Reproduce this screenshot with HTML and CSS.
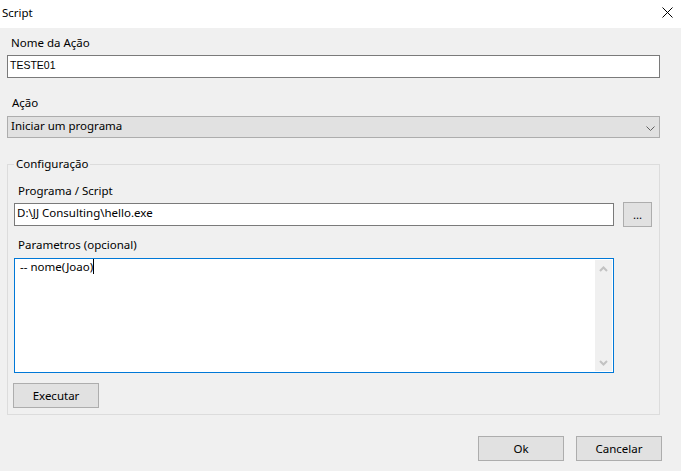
FILE: index.html
```html
<!DOCTYPE html>
<html lang="pt">
<head>
<meta charset="utf-8">
<title>Script</title>
<link rel="stylesheet" href="styles.css">
</head>
<body>
<div class="dialog">
  <div class="titlebar">
    <span class="title">Script</span>
    <svg class="close" width="11" height="11" viewBox="0 0 11 11"><path d="M0.5 0.5 L10.5 10.5 M10.5 0.5 L0.5 10.5" stroke="#000" stroke-width="1" fill="none"/></svg>
  </div>
  <div class="content">
    <div class="label label-first">Nome da Ação</div>
    <div class="textbox name-box">TESTE01</div>
    <div class="label label-acao">Ação</div>
    <div class="combo">
      <span class="combo-text">Iniciar um programa</span>
      <svg class="chevron" width="9" height="5" viewBox="0 0 9 5"><polyline points="0.5,0.5 4.5,4.5 8.5,0.5" fill="none" stroke="#606060" stroke-width="1"/></svg>
    </div>
    <fieldset class="group">
      <legend class="legend">Configuração</legend>
      <div class="group-body">
        <div class="label label-inner">Programa / Script</div>
        <div class="path-row">
          <div class="textbox path-box">D:\JJ Consulting\hello.exe</div>
          <div class="button browse">...</div>
        </div>
        <div class="label label-inner label-params">Parametros (opcional)</div>
        <div class="memo">
          <div class="memo-text">-- nome(Joao)<span class="caret"></span></div>
          <div class="scrollbar">
            <svg width="9" height="6" viewBox="0 0 9 6"><polyline points="1,5 4.5,1.5 8,5" fill="none" stroke="#c2c2c2" stroke-width="2"/></svg>
            <svg width="9" height="6" viewBox="0 0 9 6"><polyline points="1,1 4.5,4.5 8,1" fill="none" stroke="#c2c2c2" stroke-width="2"/></svg>
          </div>
        </div>
        <div class="button exec">Executar</div>
      </div>
    </fieldset>
    <div class="footer">
      <div class="button">Ok</div>
      <div class="button">Cancelar</div>
    </div>
  </div>
</div>
</body>
</html>
```

FILE: styles.css
```css
html, body {
  margin: 0;
  padding: 0;
  background: #f0f0f0;
}
.dialog {
  width: 681px;
  height: 471px;
  overflow: hidden;
  background: #f0f0f0;
  font-family: "Noto Sans", "Open Sans", sans-serif;
  font-size: 11.5px;
  line-height: 16px;
  color: #000;
  display: flex;
  flex-direction: column;
}
.titlebar {
  height: 28px;
  flex: 0 0 28px;
  background: #fff;
  display: flex;
  align-items: flex-start;
  justify-content: space-between;
  box-sizing: border-box;
  padding: 5px 0 0 2px;
}
.close {
  margin-top: 2px;
  margin-right: 8px;
}
.content {
  padding: 0 21px 0 7px;
  display: flex;
  flex-direction: column;
}
.label {
  height: 16px;
  padding-left: 4px;
}
.label-first {
  margin-top: 7px;
}
.label-acao {
  margin-top: 17px;
  padding-left: 5px;
}
.textbox {
  box-sizing: border-box;
  background: #fff;
  border: 1px solid #7a7a7a;
  white-space: nowrap;
}
.name-box {
  margin-top: 4px;
  height: 23px;
  padding: 3px 0 0 2px;
  font-family: "Liberation Sans", Arial, sans-serif;
  font-size: 10.5px;
  line-height: 13px;
}
.combo {
  margin-top: 5px;
  height: 22px;
  box-sizing: border-box;
  background: #e1e1e1;
  border: 1px solid #adadad;
  display: flex;
  align-items: flex-start;
  justify-content: space-between;
  padding: 1px 0 0 3px;
}
.chevron {
  margin-top: 8px;
  margin-right: 4px;
}
.group {
  margin: 18px 0 0 0;
  padding: 0 7px 6px 6px;
  border: 1px solid #dcdcdc;
  min-width: 0;
}
.legend {
  padding: 0 2px 2px 2px;
  line-height: 15px;
}
.group-body {
  display: flex;
  flex-direction: column;
  padding-top: 10px;
}
.label-inner {
  padding-left: 4px;
}
.path-row {
  margin-top: 3px;
  height: 25px;
  display: flex;
  align-items: center;
  gap: 9px;
}
.path-box {
  width: 600px;
  height: 23px;
  padding: 1px 0 0 2px;
}
.button {
  box-sizing: border-box;
  width: 86px;
  height: 25px;
  background: #e1e1e1;
  border: 1px solid #adadad;
  display: flex;
  align-items: center;
  justify-content: center;
}
.browse {
  width: 29px;
}
.label-params {
  margin-top: 10px;
}
.memo {
  margin-top: 5px;
  width: 600px;
  height: 115px;
  box-sizing: border-box;
  background: #fff;
  border: 1px solid #0078d7;
  display: flex;
}
.memo-text {
  flex: 1;
  padding-left: 5px;
}
.caret {
  display: inline-block;
  width: 1px;
  height: 15px;
  background: #000;
  vertical-align: -3px;
}
.scrollbar {
  width: 17px;
  margin: 1px;
  background: #f0f0f0;
  display: flex;
  flex-direction: column;
  justify-content: space-between;
  align-items: center;
  padding: 6px 0 5px 0;
  box-sizing: border-box;
}
.scrollbar svg {
  display: block;
}
.exec {
  margin-top: 10px;
  margin-left: -1px;
}
.footer {
  margin-top: 21px;
  margin-right: -2px;
  display: flex;
  justify-content: flex-end;
  gap: 12px;
}
```
